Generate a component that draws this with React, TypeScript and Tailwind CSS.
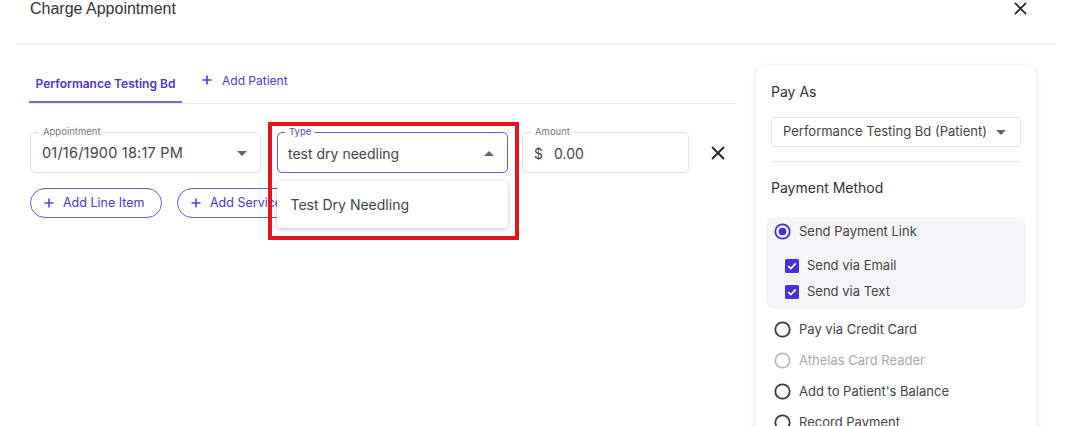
import React from "react";

const Caret = ({ up = false }: { up?: boolean }) => (
  <svg width="10" height="5" viewBox="0 0 10 5" className="shrink-0">
    {up ? <path d="M0 5 L5 0 L10 5 Z" fill="#666" /> : <path d="M0 0 L5 5 L10 0 Z" fill="#666" />}
  </svg>
);

const XIcon = ({ size = 14 }: { size?: number }) => (
  <svg width={size} height={size} viewBox="0 0 14 14">
    <path d="M1.5 1.5 L12.5 12.5 M12.5 1.5 L1.5 12.5" stroke="#222" strokeWidth="1.8" strokeLinecap="round" />
  </svg>
);

const Plus = ({ color = "#5a44d4" }: { color?: string }) => (
  <svg width="10" height="10" viewBox="0 0 10 10">
    <path d="M5 0.5 V9.5 M0.5 5 H9.5" stroke={color} strokeWidth="1.6" />
  </svg>
);

const Radio = ({ checked = false, disabled = false }: { checked?: boolean; disabled?: boolean }) => (
  <svg width="17" height="17" viewBox="0 0 17 17" className="shrink-0">
    <circle cx="8.5" cy="8.5" r="7.2" fill="none" stroke={checked ? "#4a2fd6" : disabled ? "#bbb" : "#3a3a3a"} strokeWidth="1.8" />
    {checked && <circle cx="8.5" cy="8.5" r="3.8" fill="#4a2fd6" />}
  </svg>
);

const Check = () => (
  <svg width="14" height="14" viewBox="0 0 14 14" className="shrink-0">
    <rect x="0" y="0" width="14" height="14" rx="1.5" fill="#4a2fd6" />
    <path d="M3.2 7.2 L5.8 9.6 L10.8 4.4" fill="none" stroke="#fff" strokeWidth="1.7" />
  </svg>
);

export default function App() {
  return (
    <div
      className="relative w-[1068px] h-[426px] overflow-hidden bg-white text-[#333]"
      style={{ fontFamily: "Inter, 'Noto Sans', sans-serif" }}
    >
      {/* Header */}
      <div className="flex items-start justify-between pl-[30px] pr-[41px]">
        <h1 className="text-[16px] leading-[18px] text-[#333]" style={{ fontFamily: "'Liberation Sans', Inter, sans-serif" }}>
          Charge Appointment
        </h1>
        <div className="pt-[2px]">
          <XIcon size={13} />
        </div>
      </div>
      <div className="ml-[16px] mr-[12px] mt-[25px] border-t-2 border-[#eeeeee]" />

      <div className="flex pl-[29px]">
        {/* Left column */}
        <div className="w-[707px] pt-[27px]">
          {/* Tabs */}
          <div className="flex items-end border-b border-[#ececec]">
            <div className="flex h-[31px] w-[153px] items-start justify-center border-b-2 border-[#7b66d8] pt-[3px] text-[12px] font-semibold text-[#4f35d2]">
              Performance Testing Bd
            </div>
            <div className="ml-[20px] flex h-[31px] items-start gap-[10px] pt-0 text-[12px] text-[#4f35d2]">
              <span className="pt-[3px]"><Plus color="#4f35d2" /></span>
              <span>Add Patient</span>
            </div>
          </div>

          {/* Fields */}
          <div className="mt-[28px] flex items-start pl-[1px]">
            <div className="relative h-[41px] w-[231px] rounded-[5px] border border-[#e2e2e2] px-[11px]">
              <span className="absolute -top-[7px] left-[8px] bg-white px-[4px] text-[9.5px] leading-[12px] text-[#777]">Appointment</span>
              <div className="flex h-full items-center justify-between pt-[1px] pr-[2px]">
                <span className="text-[14.5px] tracking-[0.2px] text-[#444]">01/16/1900 18:17 PM</span>
                <Caret />
              </div>
            </div>

            <div className="relative ml-[16px] h-[41px] w-[231px] rounded-[5px] border-[1.5px] border-[#6a55d8] px-[10px]">
              <span className="absolute -top-[7px] left-[7px] bg-white px-[4px] text-[9.5px] leading-[12px] text-[#5a44d4]">Type</span>
              <div className="flex h-full items-center justify-between pt-[1px] pr-[3px]">
                <span className="text-[14px] text-[#444]">test dry needling</span>
                <Caret up />
              </div>
              {/* Dropdown */}
              <div className="absolute left-[-1.5px] top-[48px] z-10 flex h-[47px] w-[231px] items-center rounded-[4px] bg-white pl-[14px] text-[14px] text-[#444] shadow-[0_1px_4px_rgba(0,0,0,0.25)]">
                Test Dry Needling
              </div>
            </div>

            <div className="relative ml-[14px] h-[41px] w-[167px] rounded-[5px] border border-[#e2e2e2] px-[11px]">
              <span className="absolute -top-[7px] left-[8px] bg-white px-[4px] text-[9.5px] leading-[12px] text-[#777]">Amount</span>
              <div className="flex h-full items-center gap-[11px] pt-[1px] text-[14px] text-[#444]">
                <span>$</span>
                <span>0.00</span>
              </div>
            </div>

            <div className="ml-[22px] flex h-[41px] items-center">
              <XIcon size={14} />
            </div>
          </div>

          {/* Buttons */}
          <div className="mt-[15px] flex gap-[15px] pl-[1px]">
            <button className="flex h-[30px] w-[132px] items-center gap-[9px] rounded-full border-[1.5px] border-[#6a55d8] pl-[13px] text-[12.5px] text-[#4f35d2]">
              <Plus /> Add Line Item
            </button>
            <button className="flex h-[30px] w-[132px] items-center gap-[9px] rounded-full border-[1.5px] border-[#6a55d8] pl-[13px] text-[12.5px] text-[#4f35d2]">
              <Plus /> Add Service
            </button>
          </div>
        </div>

        {/* Right panel */}
        <div className="ml-[20px] mt-[21px] h-[400px] w-[280px] rounded-[8px] bg-white px-[15px] pt-[17px] shadow-[0_1px_6px_rgba(0,0,0,0.12)]">
          <div className="text-[14px] leading-[18px] text-[#333]">Pay As</div>
          <div className="mt-[16px] flex h-[30px] items-center justify-between rounded-[5px] border border-[#e2e2e2] pl-[11px] pr-[14px] text-[13px] text-[#444]">
            <span>Performance Testing Bd (Patient)</span>
            <Caret />
          </div>
          <div className="mt-[14px] border-t border-[#e6e6e6]" />
          <div className="mt-[17px] text-[14px] leading-[18px] text-[#333]">Payment Method</div>

          <div className="-mx-[5px] mt-[20px] h-[92px] rounded-[8px] bg-[#f5f5f7] pl-[8px] pt-[6px]">
            <div className="flex h-[17px] items-center gap-[8px] text-[13px] text-[#444]">
              <Radio checked />
              <span>Send Payment Link</span>
            </div>
            <div className="mt-[19px] flex h-[14px] items-center gap-[8px] pl-[11px] text-[13px] text-[#444]">
              <Check />
              <span>Send via Email</span>
            </div>
            <div className="mt-[12px] flex h-[14px] items-center gap-[8px] pl-[11px] text-[13px] text-[#444]">
              <Check />
              <span>Send via Text</span>
            </div>
          </div>

          <div className="mt-[12px] flex flex-col gap-[14px] pl-[3px] text-[13px]">
            <div className="flex h-[17px] items-center gap-[8px] text-[#444]">
              <Radio />
              <span>Pay via Credit Card</span>
            </div>
            <div className="flex h-[17px] items-center gap-[8px] text-[#aaa]">
              <Radio disabled />
              <span>Athelas Card Reader</span>
            </div>
            <div className="flex h-[17px] items-center gap-[8px] text-[#444]">
              <Radio />
              <span>Add to Patient's Balance</span>
            </div>
            <div className="flex h-[17px] items-center gap-[8px] text-[#444]">
              <Radio />
              <span>Record Payment</span>
            </div>
          </div>
        </div>
      </div>

      {/* Red highlight box */}
      <div className="pointer-events-none absolute left-[268px] top-[122px] z-20 h-[118px] w-[251px] border-[4px] border-[#e3141f]" />
    </div>
  );
}
